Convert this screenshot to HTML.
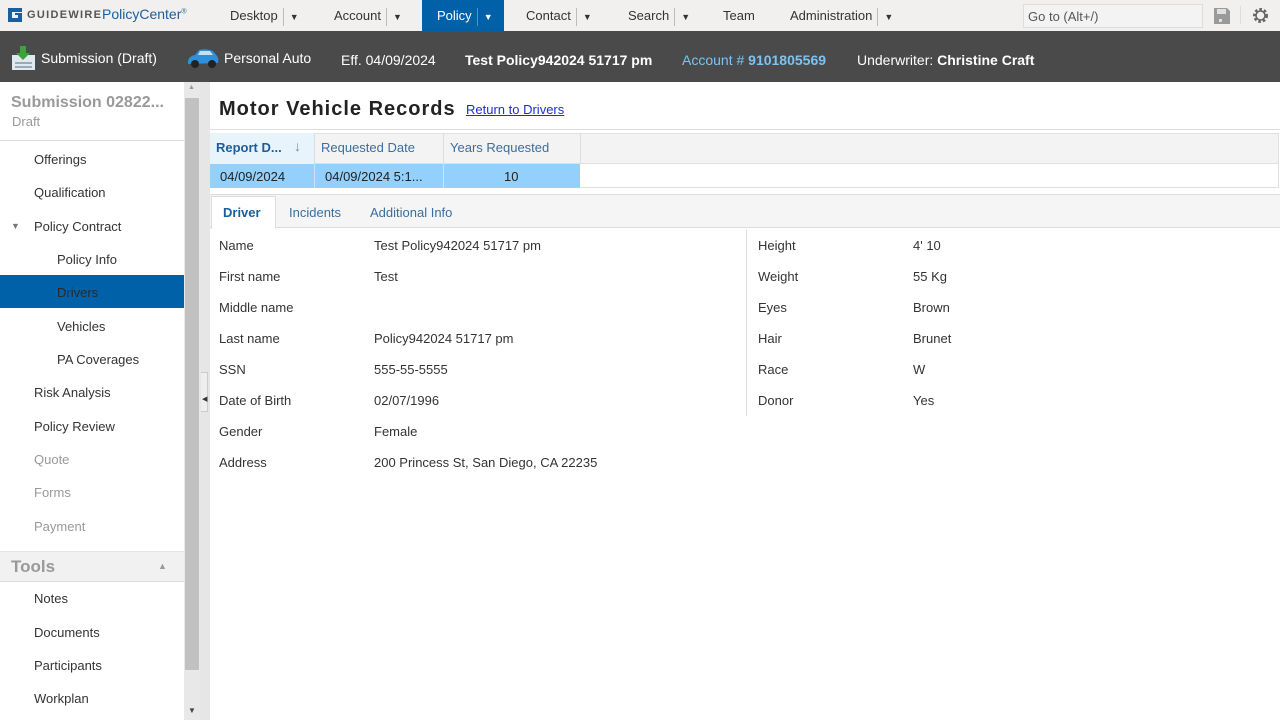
<!DOCTYPE html>
<html><head><meta charset="utf-8"><style>
*{box-sizing:border-box;margin:0;padding:0}
body{width:1280px;height:720px;overflow:hidden;font-family:"Liberation Sans",sans-serif;font-size:13px;color:#333;background:#fff;position:relative}
.a{position:absolute;white-space:nowrap}
#top{position:absolute;left:0;top:0;width:1280px;height:31px;background:#f1f0ee}
.nav{position:absolute;top:0;height:31px;line-height:31px;font-size:13px;color:#333}
.sep{display:inline-block;width:1px;height:18px;background:#bbb;vertical-align:middle;margin:0 6px 0 5px}
.tri{font-size:9px}
#hdr{position:absolute;left:0;top:31px;width:1280px;height:51px;background:#4a4a4a;color:#fff;font-size:14px}
#side{position:absolute;left:0;top:82px;width:184px;height:638px;background:#fff}
.it{position:absolute;left:34px;font-size:13px;color:#333}
.sub{left:57px}
.dis{color:#999}
#sb{position:absolute;left:184px;top:82px;width:16px;height:638px;background:#e8e8e8}
#div{position:absolute;left:200px;top:82px;width:10px;height:638px;background:#e6e6e6}
.lbl{position:absolute;font-size:13px;color:#333}
</style></head><body>
<div id="top">
 <svg class="a" style="left:8px;top:8px" width="14" height="14" viewBox="0 0 14 14"><path d="M0 0H14V4H4V10H10V7H7V5H14V14H0Z" fill="#1b5e9e"/></svg>
 <div class="a" style="left:27px;top:9px;font-size:11px;font-weight:bold;letter-spacing:1.3px;color:#555">GUIDEWIRE</div>
 <div class="a" style="left:102px;top:6px;font-size:14px;color:#1b5e9e">PolicyCenter<sup style="font-size:7px">®</sup></div>
 <div class="nav" style="left:230px">Desktop<span class="sep"></span><span class="tri">▼</span></div>
 <div class="nav" style="left:334px">Account<span class="sep"></span><span class="tri">▼</span></div>
 <div class="nav" style="left:422px;width:82px;background:#0060a8;color:#fff;padding-left:15px">Policy<span class="sep" style="background:#5b8fc4"></span><span class="tri">▼</span></div>
 <div class="nav" style="left:526px">Contact<span class="sep"></span><span class="tri">▼</span></div>
 <div class="nav" style="left:628px">Search<span class="sep"></span><span class="tri">▼</span></div>
 <div class="nav" style="left:723px">Team</div>
 <div class="nav" style="left:790px">Administration<span class="sep"></span><span class="tri">▼</span></div>
 <div class="a" style="left:1023px;top:4px;width:180px;height:24px;border:1px solid #ddd;background:#f3f3f3;font-size:13px;color:#555;padding:4px 4px;line-height:15px">Go to (Alt+/)</div>
 <svg class="a" style="left:1214px;top:8px" width="16" height="16" viewBox="0 0 16 16"><path d="M0 0H13L16 3V16H0Z" fill="#9a9a9a"/><rect x="3" y="1" width="9" height="5" fill="#e0e0e0"/><rect x="5" y="11" width="3" height="3" fill="#e0e0e0"/></svg>
 <div class="a" style="left:1240px;top:6px;width:1px;height:18px;background:#ddd"></div>
 <svg class="a" style="left:1252px;top:7px" width="17" height="17" viewBox="0 0 17 17"><circle cx="8.5" cy="8.5" r="6" fill="none" stroke="#666" stroke-width="3" stroke-dasharray="2.5 2"/><circle cx="8.5" cy="8.5" r="4.5" fill="none" stroke="#666" stroke-width="1.6"/></svg>
</div>
<div id="hdr">
 <svg class="a" style="left:11px;top:15px" width="25" height="25" viewBox="0 0 25 25"><rect x="1" y="9" width="23" height="15" fill="#e0e8f0"/><rect x="4" y="16" width="17" height="2" fill="#9ab"/><rect x="4" y="20" width="17" height="2" fill="#9ab"/><path d="M9 0H15V7H19L12 14L5 7H9Z" fill="#3ba33b"/></svg>
 <div class="a" style="left:41px;top:19px">Submission (Draft)</div>
 <svg class="a" style="left:186px;top:16px" width="34" height="22" viewBox="0 0 34 22"><path d="M2 14 Q3 9 9 8 L13 3 Q20 1 27 4 L31 9 Q33 11 32 16 L2 17Z" fill="#2f8fd8"/><path d="M14 4 L24 4 L27 8 L12 8Z" fill="#bfe2f7"/><circle cx="9" cy="17" r="4" fill="#222"/><circle cx="26" cy="17" r="4" fill="#222"/></svg>
 <div class="a" style="left:224px;top:19px">Personal Auto</div>
 <div class="a" style="left:341px;top:21px">Eff. 04/09/2024</div>
 <div class="a" style="left:465px;top:21px;font-weight:bold">Test Policy942024 51717 pm</div>
 <div class="a" style="left:682px;top:21px;color:#7cc3f3">Account # <b>9101805569</b></div>
 <div class="a" style="left:857px;top:21px">Underwriter: <b>Christine Craft</b></div>
</div>
<div id="side">
 <div class="a" style="left:11px;top:12px;font-size:16px;font-weight:bold;color:#999">Submission 02822...</div>
 <div class="a" style="left:12px;top:32px;font-size:13px;color:#999">Draft</div>
 <div class="a" style="left:0;top:58px;width:184px;height:1px;background:#ddd"></div>
 <div class="it" style="top:70px">Offerings</div>
 <div class="it" style="top:103px">Qualification</div>
 <div class="a" style="left:11px;top:139px;font-size:9px;color:#777">▼</div>
 <div class="it" style="top:137px">Policy Contract</div>
 <div class="it sub" style="top:170px">Policy Info</div>
 <div class="a" style="left:0;top:193px;width:184px;height:33px;background:#0060a8"></div>
 <div class="it sub" style="top:203px;color:#2a2a2a">Drivers</div>
 <div class="it sub" style="top:237px">Vehicles</div>
 <div class="it sub" style="top:270px">PA Coverages</div>
 <div class="it" style="top:303px">Risk Analysis</div>
 <div class="it" style="top:337px">Policy Review</div>
 <div class="it dis" style="top:370px">Quote</div>
 <div class="it dis" style="top:403px">Forms</div>
 <div class="it dis" style="top:437px">Payment</div>
 <div class="a" style="left:0;top:469px;width:184px;height:31px;background:#f1f1f1;border-top:1px solid #e4e4e4;border-bottom:1px solid #ddd"></div>
 <div class="a" style="left:11px;top:475px;font-size:17px;font-weight:bold;color:#999">Tools</div>
 <div class="a" style="left:158px;top:479px;font-size:9px;color:#999">▲</div>
 <div class="it" style="top:509px">Notes</div>
 <div class="it" style="top:543px">Documents</div>
 <div class="it" style="top:576px">Participants</div>
 <div class="it" style="top:609px">Workplan</div>
</div>
<div id="sb"><div class="a" style="left:1px;top:16px;width:14px;height:572px;background:#c1c1c1"></div>
 <div class="a" style="left:4px;top:2px;font-size:7px;color:#999">▲</div>
 <div class="a" style="left:4px;top:624px;font-size:8px;color:#444">▼</div></div>
<div id="div"><div class="a" style="left:1px;top:290px;width:7px;height:40px;border:1px solid #ccc;border-left:none;background:#eee"></div><div class="a" style="left:2px;top:313px;font-size:7px;color:#333">◀</div></div>

<div class="a" style="left:219px;top:98px;font-size:20px;font-weight:bold;color:#222;letter-spacing:1px">Motor Vehicle Records</div>
<div class="a" style="left:466px;top:102px;font-size:13px;color:#1b2fd0;text-decoration:underline">Return to Drivers</div>
<div class="a" style="left:210px;top:129px;width:1070px;height:1px;background:#ddd"></div>
<div class="a" style="left:210px;top:133px;width:1069px;height:31px;background:#f3f3f3;border:1px solid #e0e0e0"></div>
<div class="a" style="left:210px;top:133px;width:104px;height:31px;background:#e8f4fc"></div>
<div class="a" style="left:216px;top:140px;font-weight:bold;color:#1b5e9e">Report D...</div>
<div class="a" style="left:294px;top:138px;font-size:14px;color:#888">↓</div>
<div class="a" style="left:314px;top:133px;width:1px;height:55px;background:#ddd"></div>
<div class="a" style="left:321px;top:140px;color:#3a6e9e">Requested Date</div>
<div class="a" style="left:443px;top:133px;width:1px;height:55px;background:#ddd"></div>
<div class="a" style="left:450px;top:140px;color:#3a6e9e">Years Requested</div>
<div class="a" style="left:580px;top:133px;width:1px;height:31px;background:#ddd"></div>
<div class="a" style="left:210px;top:164px;width:370px;height:24px;background:#94d0fc"></div>
<div class="a" style="left:580px;top:164px;width:699px;height:24px;border-right:1px solid #e0e0e0;border-bottom:1px solid #e0e0e0"></div>
<div class="a" style="left:314px;top:164px;width:1px;height:24px;background:#c8e4f8"></div>
<div class="a" style="left:443px;top:164px;width:1px;height:24px;background:#c8e4f8"></div>
<div class="a" style="left:220px;top:169px;color:#222">04/09/2024</div>
<div class="a" style="left:325px;top:169px;color:#222">04/09/2024 5:1...</div>
<div class="a" style="left:504px;top:169px;color:#222">10</div>
<div class="a" style="left:210px;top:194px;width:1070px;height:34px;background:#f5f5f5;border-top:1px solid #ddd;border-bottom:1px solid #ddd"></div>
<div class="a" style="left:211px;top:196px;width:65px;height:33px;background:#fff;border:1px solid #ddd;border-bottom:none"></div>
<div class="a" style="left:223px;top:205px;font-weight:bold;color:#1b5e9e">Driver</div>
<div class="a" style="left:289px;top:205px;color:#3a6e9e">Incidents</div>
<div class="a" style="left:370px;top:205px;color:#3a6e9e">Additional Info</div>

<div class="lbl" style="left:219px;top:238px">Name</div><div class="lbl" style="left:374px;top:238px">Test Policy942024 51717 pm</div>
<div class="lbl" style="left:219px;top:269px">First name</div><div class="lbl" style="left:374px;top:269px">Test</div>
<div class="lbl" style="left:219px;top:300px">Middle name</div>
<div class="lbl" style="left:219px;top:331px">Last name</div><div class="lbl" style="left:374px;top:331px">Policy942024 51717 pm</div>
<div class="lbl" style="left:219px;top:362px">SSN</div><div class="lbl" style="left:374px;top:362px">555-55-5555</div>
<div class="lbl" style="left:219px;top:393px">Date of Birth</div><div class="lbl" style="left:374px;top:393px">02/07/1996</div>
<div class="lbl" style="left:219px;top:424px">Gender</div><div class="lbl" style="left:374px;top:424px">Female</div>
<div class="lbl" style="left:219px;top:455px">Address</div><div class="lbl" style="left:374px;top:455px">200 Princess St, San Diego, CA 22235</div>
<div class="a" style="left:746px;top:230px;width:1px;height:186px;background:#ddd"></div>
<div class="lbl" style="left:758px;top:238px">Height</div><div class="lbl" style="left:913px;top:238px">4' 10</div>
<div class="lbl" style="left:758px;top:269px">Weight</div><div class="lbl" style="left:913px;top:269px">55 Kg</div>
<div class="lbl" style="left:758px;top:300px">Eyes</div><div class="lbl" style="left:913px;top:300px">Brown</div>
<div class="lbl" style="left:758px;top:331px">Hair</div><div class="lbl" style="left:913px;top:331px">Brunet</div>
<div class="lbl" style="left:758px;top:362px">Race</div><div class="lbl" style="left:913px;top:362px">W</div>
<div class="lbl" style="left:758px;top:393px">Donor</div><div class="lbl" style="left:913px;top:393px">Yes</div>
</body></html>
